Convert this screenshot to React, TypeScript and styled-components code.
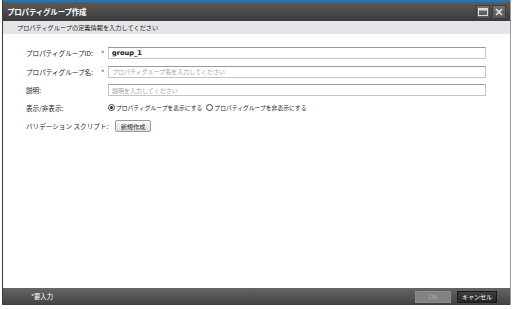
import React from "react";
import styled, { createGlobalStyle } from "styled-components";

const Global = createGlobalStyle`
  html, body { margin: 0; padding: 0; background: #fff; }
  body { font-family: "Noto Sans CJK JP", "DejaVu Sans", sans-serif; }
`;

const Frame = styled.div`
  width: 514px;
  height: 309px;
  box-sizing: border-box;
  padding: 0 3px 4px 2px;
  background: #fff;
  display: flex;
`;

const Win = styled.div`
  flex: 1;
  display: flex;
  flex-direction: column;
  border-left: 1px solid #3a3a3a;
  border-right: 1px solid #9a9a9a;
  background: #fff;
`;

const TitleBar = styled.div`
  height: 19px;
  border-top: 2px solid #1c78c0;
  background: linear-gradient(#5a5a5a, #3a3a3a);
  display: flex;
  align-items: center;
  justify-content: space-between;
  padding: 0 4px 0 4px;
`;

const Title = styled.div`
  color: #fff;
  font-size: 7.5px;
  font-weight: bold;
  letter-spacing: -0.2px;
`;

const Tools = styled.div`
  display: flex;
  gap: 2px;
`;

const ToolBtn = styled.div`
  width: 14px;
  height: 14px;
  background: linear-gradient(#727272, #565656);
  border: 1px solid #3c3c3c;
  box-sizing: border-box;
  display: flex;
  align-items: center;
  justify-content: center;
`;

const SubHeader = styled.div`
  height: 13px;
  background: #e3e5e9;
  font-size: 6.2px;
  color: #222;
  display: flex;
  align-items: center;
  padding-left: 14px;
`;

const Body = styled.div`
  flex: 1;
  padding: 9px 0 0 23px;
  display: flex;
  flex-direction: column;
`;

const Row = styled.div<{ $h: number }>`
  display: flex;
  align-items: center;
  height: ${(p) => p.$h}px;
`;

const Label = styled.div`
  width: 75px;
  flex-shrink: 0;
  font-size: 6.6px;
  color: #222;
  white-space: nowrap;
`;

const Req = styled.div`
  width: 7px;
  flex-shrink: 0;
  font-size: 8px;
  color: #d03030;
  padding-top: 2px;
`;

const Input = styled.div<{ $ph?: boolean }>`
  width: 378px;
  height: 12px;
  box-sizing: border-box;
  border: 1px solid #c4c4c4;
  border-top-color: #9a9a9a;
  font-size: ${(p) => (p.$ph ? "6px" : "6.6px")};
  color: ${(p) => (p.$ph ? "#a0a0a0" : "#111")};
  display: flex;
  align-items: center;
  padding-left: 3px;
  font-family: ${(p) => (p.$ph ? `"Noto Sans CJK JP", sans-serif` : `"DejaVu Sans", "Noto Sans CJK JP", sans-serif`)};
  font-weight: ${(p) => (p.$ph ? "normal" : "bold")};
`;

const Radios = styled.div`
  display: flex;
  align-items: center;
  gap: 4px;
  font-size: 5.8px;
  color: #222;
  white-space: nowrap;
`;

const RadioItem = styled.div`
  display: flex;
  align-items: center;
  gap: 1px;
`;

const RadioDot = styled.span<{ $on?: boolean }>`
  width: 7px;
  height: 7px;
  border-radius: 50%;
  border: 1px solid #444;
  box-sizing: border-box;
  display: inline-flex;
  align-items: center;
  justify-content: center;
  &::after {
    content: "";
    width: 3px;
    height: 3px;
    border-radius: 50%;
    background: ${(p) => (p.$on ? "#222" : "transparent")};
  }
`;

const SmallBtn = styled.div`
  width: 36px;
  height: 12px;
  box-sizing: border-box;
  border: 1px solid #9a9a9a;
  border-radius: 2px;
  background: linear-gradient(#fafafa, #dedede);
  font-size: 6.2px;
  color: #333;
  display: flex;
  align-items: center;
  justify-content: center;
  margin-left: 14px;
  white-space: nowrap;
`;

const Footer = styled.div`
  height: 17px;
  background: linear-gradient(#666, #414141);
  display: flex;
  align-items: center;
  justify-content: space-between;
  padding: 0 13px 0 28px;
`;

const Note = styled.div`
  color: #fff;
  font-size: 6.4px;
`;

const FootBtns = styled.div`
  display: flex;
  gap: 6px;
`;

const FootBtn = styled.div<{ $disabled?: boolean }>`
  height: 12px;
  box-sizing: border-box;
  width: ${(p) => (p.$disabled ? "36px" : "40px")};
  font-size: 6.2px;
  white-space: nowrap;
  letter-spacing: -0.2px;
  display: flex;
  align-items: center;
  justify-content: center;
  border: 1px solid ${(p) => (p.$disabled ? "#8a8a8a" : "#1c1c1c")};
  background: ${(p) => (p.$disabled ? "#828282" : "linear-gradient(#3e3e3e, #262626)")};
  color: ${(p) => (p.$disabled ? "#a8a8a8" : "#fff")};
  font-family: "DejaVu Sans", "Noto Sans CJK JP", sans-serif;
`;

export default function App() {
  return (
    <Frame>
      <Global />
      <Win>
        <TitleBar>
          <Title>プロパティグループ作成</Title>
          <Tools>
            <ToolBtn>
              <svg width="10" height="8" viewBox="0 0 10 8">
                <rect x="0.5" y="0.5" width="9" height="7" fill="none" stroke="#ddd" strokeWidth="1" />
                <rect x="0.5" y="0.5" width="9" height="2" fill="#ddd" />
              </svg>
            </ToolBtn>
            <ToolBtn>
              <svg width="8" height="8" viewBox="0 0 8 8">
                <path d="M1 1 L7 7 M7 1 L1 7" stroke="#e6e6e6" strokeWidth="1.6" />
              </svg>
            </ToolBtn>
          </Tools>
        </TitleBar>
        <SubHeader>プロパティグループの定義情報を入力してください</SubHeader>
        <Body>
          <Row $h={19}>
            <Label>プロパティグループID:</Label>
            <Req>*</Req>
            <Input>group_1</Input>
          </Row>
          <Row $h={19}>
            <Label>プロパティグループ名:</Label>
            <Req>*</Req>
            <Input $ph>プロパティグループ名を入力してください</Input>
          </Row>
          <Row $h={18}>
            <Label>説明:</Label>
            <Req />
            <Input $ph>説明を入力してください</Input>
          </Row>
          <Row $h={17}>
            <Label>表示/非表示:</Label>
            <Req />
            <Radios>
              <RadioItem>
                <RadioDot $on />
                プロパティグループを表示にする
              </RadioItem>
              <RadioItem>
                <RadioDot />
                プロパティグループを非表示にする
              </RadioItem>
            </Radios>
          </Row>
          <Row $h={20}>
            <Label>バリデーション スクリプト:</Label>
            <SmallBtn>新規作成</SmallBtn>
          </Row>
        </Body>
        <Footer>
          <Note>*要入力</Note>
          <FootBtns>
            <FootBtn $disabled>OK</FootBtn>
            <FootBtn>キャンセル</FootBtn>
          </FootBtns>
        </Footer>
      </Win>
    </Frame>
  );
}
